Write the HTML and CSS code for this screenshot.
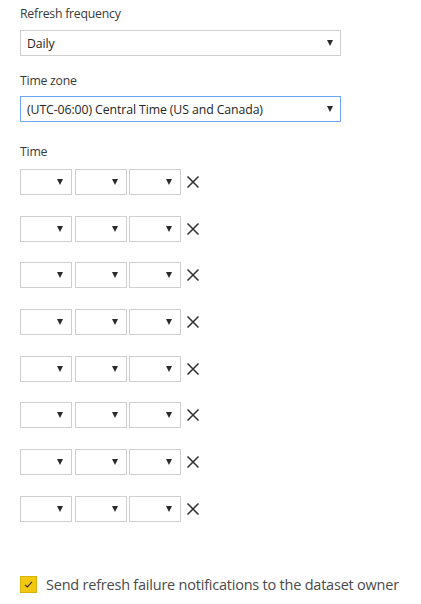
FILE: index.html
```html
<!DOCTYPE html>
<html>
<head>
<meta charset="utf-8">
<link rel="stylesheet" href="styles.css">
</head>
<body>
<div class="panel">
  <div class="label">Refresh frequency</div>
  <div class="select wide"><span class="value">Daily</span><span class="arrow"></span></div>

  <div class="label tz-label">Time zone</div>
  <div class="select wide focused"><span class="value">(UTC-06:00) Central Time (US and Canada)</span><span class="arrow"></span></div>

  <div class="label time-label">Time</div>
  <div class="rows">
    <div class="row"><div class="select small"><span class="arrow"></span></div><div class="select small"><span class="arrow"></span></div><div class="select small"><span class="arrow"></span></div><svg class="close" viewBox="0 0 12 12"><path d="M0.5 0.5 L11.5 11.5 M11.5 0.5 L0.5 11.5"/></svg></div>
    <div class="row"><div class="select small"><span class="arrow"></span></div><div class="select small"><span class="arrow"></span></div><div class="select small"><span class="arrow"></span></div><svg class="close" viewBox="0 0 12 12"><path d="M0.5 0.5 L11.5 11.5 M11.5 0.5 L0.5 11.5"/></svg></div>
    <div class="row"><div class="select small"><span class="arrow"></span></div><div class="select small"><span class="arrow"></span></div><div class="select small"><span class="arrow"></span></div><svg class="close" viewBox="0 0 12 12"><path d="M0.5 0.5 L11.5 11.5 M11.5 0.5 L0.5 11.5"/></svg></div>
    <div class="row"><div class="select small"><span class="arrow"></span></div><div class="select small"><span class="arrow"></span></div><div class="select small"><span class="arrow"></span></div><svg class="close" viewBox="0 0 12 12"><path d="M0.5 0.5 L11.5 11.5 M11.5 0.5 L0.5 11.5"/></svg></div>
    <div class="row"><div class="select small"><span class="arrow"></span></div><div class="select small"><span class="arrow"></span></div><div class="select small"><span class="arrow"></span></div><svg class="close" viewBox="0 0 12 12"><path d="M0.5 0.5 L11.5 11.5 M11.5 0.5 L0.5 11.5"/></svg></div>
    <div class="row"><div class="select small"><span class="arrow"></span></div><div class="select small"><span class="arrow"></span></div><div class="select small"><span class="arrow"></span></div><svg class="close" viewBox="0 0 12 12"><path d="M0.5 0.5 L11.5 11.5 M11.5 0.5 L0.5 11.5"/></svg></div>
    <div class="row"><div class="select small"><span class="arrow"></span></div><div class="select small"><span class="arrow"></span></div><div class="select small"><span class="arrow"></span></div><svg class="close" viewBox="0 0 12 12"><path d="M0.5 0.5 L11.5 11.5 M11.5 0.5 L0.5 11.5"/></svg></div>
    <div class="row"><div class="select small"><span class="arrow"></span></div><div class="select small"><span class="arrow"></span></div><div class="select small"><span class="arrow"></span></div><svg class="close" viewBox="0 0 12 12"><path d="M0.5 0.5 L11.5 11.5 M11.5 0.5 L0.5 11.5"/></svg></div>
  </div>

  <label class="check">
    <span class="box"><svg viewBox="0 0 17 17"><path d="M4.5 8.8 L7.2 11.3 L12.5 5.6"/></svg></span>
    <span class="check-text">Send refresh failure notifications to the dataset owner</span>
  </label>
</div>
</body>
</html>
```

FILE: styles.css
```css
html, body {
  margin: 0;
  padding: 0;
  background: #ffffff;
}

.panel {
  padding: 4px 20px 0 20px;
  font-family: "Open Sans", "Noto Sans", sans-serif;
  color: #333333;
  width: 321px;
}

.label {
  font-size: 12.3px;
  line-height: 20px;
  letter-spacing: -0.25px;
  color: #3a3a3a;
  margin-bottom: 6px;
}

.tz-label {
  margin-top: 15px;
  margin-bottom: 5px;
}

.time-label {
  margin-top: 20px;
  margin-bottom: 7px;
}

.select {
  box-sizing: border-box;
  height: 26px;
  border: 1px solid #cfcfcf;
  background: #fff;
  display: flex;
  align-items: center;
  position: relative;
}

.select.wide {
  width: 321px;
  padding-left: 6px;
}

.select.focused {
  border-color: #6ea6f0;
}

.value {
  font-size: 12.3px;
  letter-spacing: -0.1px;
  color: #252525;
  flex: 1;
  white-space: nowrap;
}

.arrow {
  width: 0;
  height: 0;
  border-left: 3px solid transparent;
  border-right: 3px solid transparent;
  border-top: 6px solid #2b2b2b;
  margin-right: 7px;
  margin-left: auto;
}

.rows {
  display: flex;
  flex-direction: column;
  gap: 20.7px;
}

.row {
  display: flex;
  align-items: center;
}

.select.small {
  width: 52px;
  margin-right: 2.5px;
}

.select.small .arrow {
  margin-right: 8px;
}

.close {
  width: 12px;
  height: 12px;
  margin-left: 3px;
  fill: none;
  stroke: #2f2f2f;
  stroke-width: 1.5;
}

.check {
  display: flex;
  align-items: center;
  margin-top: 53px;
  height: 20px;
}

.box {
  box-sizing: border-box;
  width: 17px;
  height: 17px;
  background: #f2c811;
  border: 1px solid #d8b20c;
  display: flex;
  flex-shrink: 0;
}

.box svg {
  width: 15px;
  height: 15px;
  fill: none;
  stroke: #2e2806;
  stroke-width: 1.2;
}

.check-text {
  margin-left: 9px;
  font-size: 14.5px;
  letter-spacing: -0.22px;
  color: #4a4a4a;
  white-space: nowrap;
}
```
